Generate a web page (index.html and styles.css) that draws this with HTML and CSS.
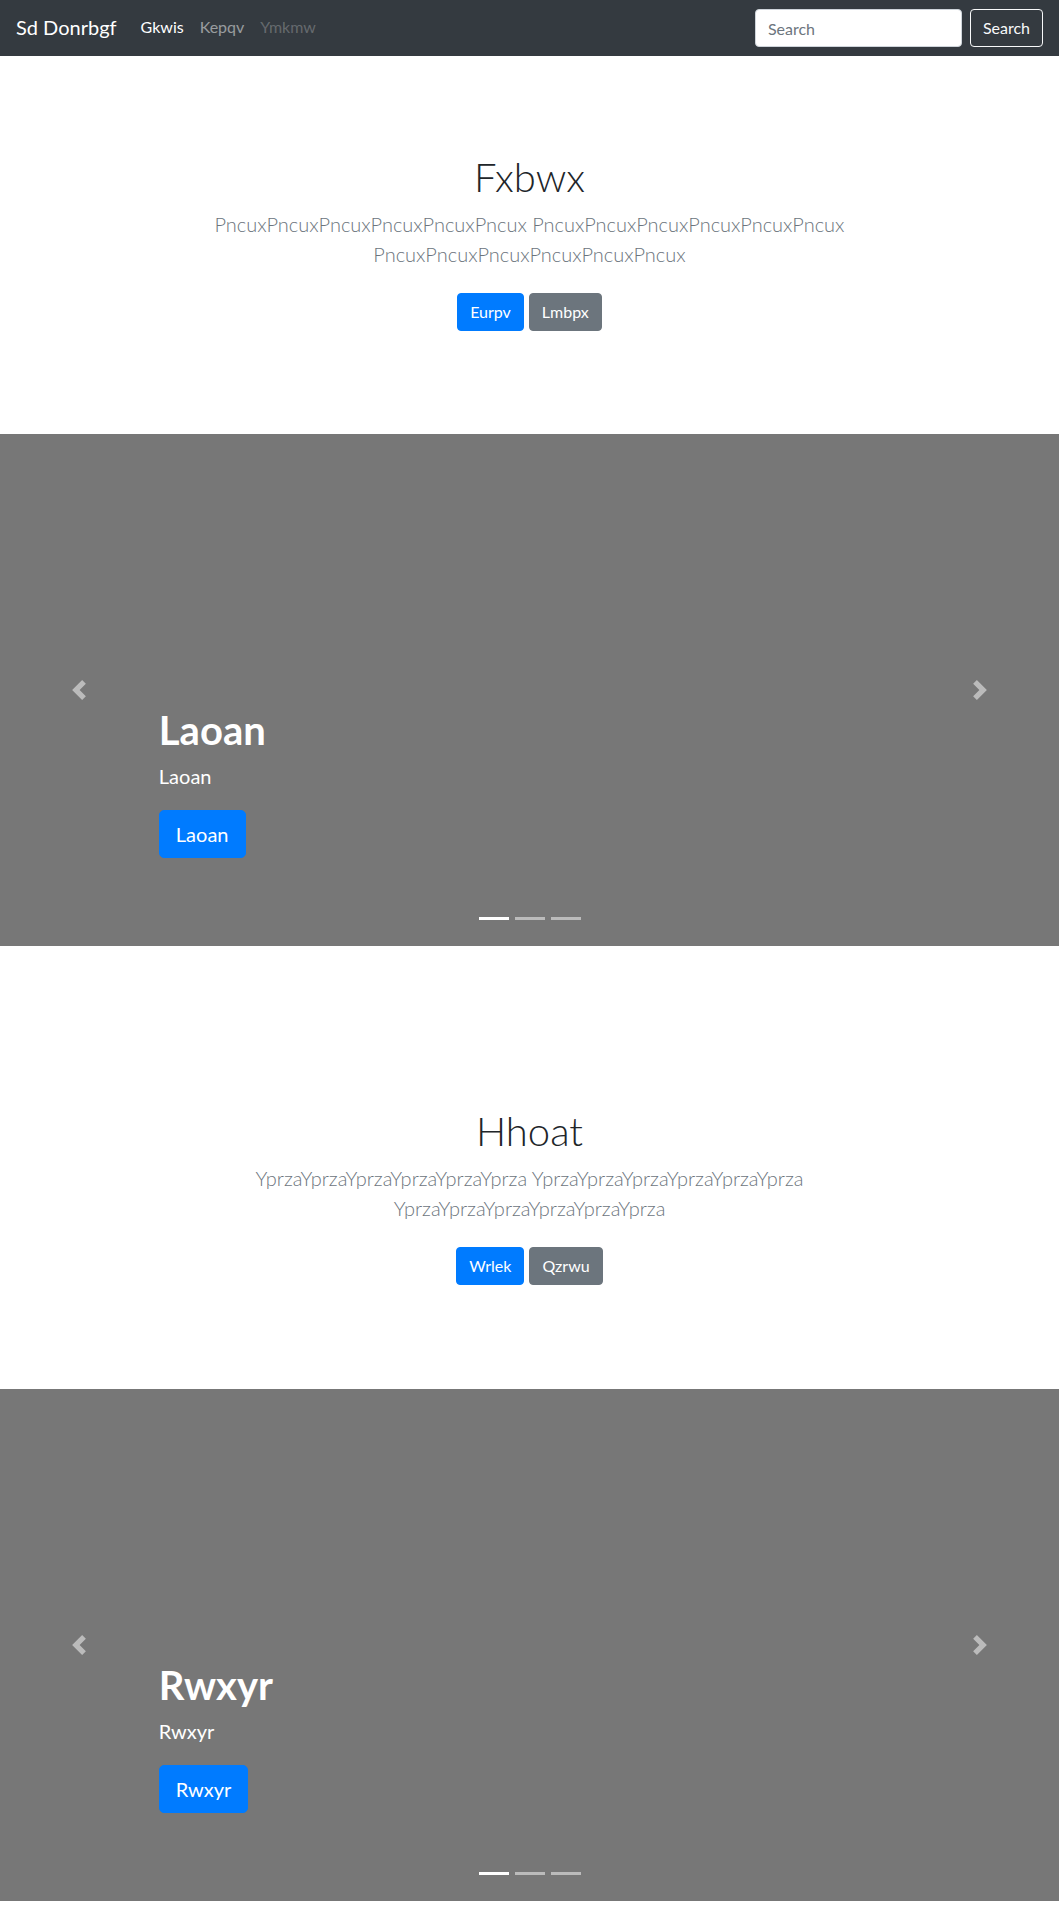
FILE: index.html
```html
<!DOCTYPE html>
<html lang="en">
<head>
<meta charset="utf-8">
<title>Sd Donrbgf</title>
<link rel="stylesheet" href="styles.css">
</head>
<body>
<nav class="navbar">
  <a class="brand" href="#">Sd Donrbgf</a>
  <ul class="nav">
    <li><a class="nav-link active" href="#">Gkwis</a></li>
    <li><a class="nav-link" href="#">Kepqv</a></li>
    <li><a class="nav-link disabled" href="#">Ymkmw</a></li>
  </ul>
  <form class="search">
    <input class="search-input" type="text" placeholder="Search">
    <button class="search-btn" type="button">Search</button>
  </form>
</nav>
<main>
  <section class="hero">
    <div class="hero-inner">
      <h1 class="hero-title">Fxbwx</h1>
      <p class="lead">PncuxPncuxPncuxPncuxPncuxPncux PncuxPncuxPncuxPncuxPncuxPncux PncuxPncuxPncuxPncuxPncuxPncux</p>
      <p class="actions"><a class="btn btn-primary" href="#">Eurpv</a><a class="btn btn-secondary" href="#">Lmbpx</a></p>
    </div>
  </section>
  <section class="carousel">
    <div class="control"><svg class="chev" viewBox="0 0 8 8" width="20" height="20"><path d="M5.25 0l-4 4 4 4 1.5-1.5L4.25 4l2.5-2.5L5.25 0z" fill="#fff"/></svg></div>
    <div class="caption">
      <h1 class="caption-title">Laoan</h1>
      <p class="caption-text">Laoan</p>
      <p class="caption-actions"><a class="btn btn-lg btn-primary" href="#">Laoan</a></p>
    </div>
    <div class="control"><svg class="chev" viewBox="0 0 8 8" width="20" height="20"><path d="M2.75 0l-1.5 1.5L3.75 4l-2.5 2.5L2.75 8l4-4-4-4z" fill="#fff"/></svg></div>
    <ol class="indicators"><li class="active"></li><li></li><li></li></ol>
  </section>
  <section class="hero hero-second">
    <div class="hero-inner">
      <h1 class="hero-title">Hhoat</h1>
      <p class="lead">YprzaYprzaYprzaYprzaYprzaYprza YprzaYprzaYprzaYprzaYprzaYprza YprzaYprzaYprzaYprzaYprzaYprza</p>
      <p class="actions"><a class="btn btn-primary" href="#">Wrlek</a><a class="btn btn-secondary" href="#">Qzrwu</a></p>
    </div>
  </section>
  <section class="carousel">
    <div class="control"><svg class="chev" viewBox="0 0 8 8" width="20" height="20"><path d="M5.25 0l-4 4 4 4 1.5-1.5L4.25 4l2.5-2.5L5.25 0z" fill="#fff"/></svg></div>
    <div class="caption">
      <h1 class="caption-title">Rwxyr</h1>
      <p class="caption-text">Rwxyr</p>
      <p class="caption-actions"><a class="btn btn-lg btn-primary" href="#">Rwxyr</a></p>
    </div>
    <div class="control"><svg class="chev" viewBox="0 0 8 8" width="20" height="20"><path d="M2.75 0l-1.5 1.5L3.75 4l-2.5 2.5L2.75 8l4-4-4-4z" fill="#fff"/></svg></div>
    <ol class="indicators"><li class="active"></li><li></li><li></li></ol>
  </section>
</main>
</body>
</html>
```
FILE: styles.css
```css
* { box-sizing: border-box; }
html, body { margin: 0; padding: 0; }
body {
  font-family: Lato, "Open Sans", "Liberation Sans", sans-serif;
  font-size: 16px;
  line-height: 1.5;
  color: #212529;
  background: #fff;
}
a { text-decoration: none; }

/* navbar */
.navbar {
  height: 56px;
  background: #343a40;
  display: flex;
  align-items: center;
  padding: 0 16px;
}
.brand {
  color: #fff;
  font-size: 20px;
  line-height: 30px;
  margin-right: 16px;
  margin-top: -3px;
}
.nav {
  list-style: none;
  margin: 0;
  padding: 0;
  display: flex;
}
.nav-link {
  display: block;
  padding: 0 8px;
  margin-top: -2px;
  line-height: 24px;
  color: rgba(255,255,255,.5);
}
.nav-link.active { color: #fff; }
.nav-link.disabled { color: rgba(255,255,255,.25); }
.search {
  margin-left: auto;
  display: flex;
  gap: 8px;
}
.search-input {
  width: 207px;
  height: 38px;
  padding: 6px 12px;
  border: 1px solid #ced4da;
  border-radius: 4px;
  font-family: inherit;
  font-size: 16px;
  color: #495057;
  background: #fff;
}
.search-input::placeholder { color: #6c757d; }
.search-btn {
  height: 38px;
  padding: 6px 12px;
  border: 1px solid #f8f9fa;
  border-radius: 4px;
  background: transparent;
  color: #f8f9fa;
  font-family: inherit;
  font-size: 16px;
  line-height: 24px;
}

/* hero */
.hero {
  padding: 97px 15px 95px;
  text-align: center;
}
.hero-second { padding-top: 161px; padding-bottom: 96px; }
.hero-inner {
  max-width: 680px;
  margin: 0 auto;
}
.hero-title {
  margin: 0;
  font-size: 40px;
  font-weight: 300;
  line-height: 48px;
  color: #212529;
}
.lead {
  margin: 8px 0 0;
  font-size: 20px;
  font-weight: 300;
  line-height: 30px;
  color: #6c757d;
}
.actions {
  margin: 16px 0 0;
  padding: 8px 0;
  display: flex;
  justify-content: center;
  gap: 5px;
}
.btn {
  display: inline-block;
  padding: 6px 12px;
  border: 1px solid transparent;
  border-radius: 4px;
  font-size: 16px;
  line-height: 24px;
  color: #fff;
}
.btn-primary { background: #007bff; border-color: #007bff; }
.btn-secondary { background: #6c757d; border-color: #6c757d; }
.btn-lg {
  padding: 8px 16px;
  font-size: 20px;
  line-height: 30px;
  border-radius: 5px;
}

/* carousel */
.carousel {
  position: relative;
  height: 512px;
  background: #777;
  display: grid;
  grid-template-columns: 15% 1fr 15%;
}
.control {
  display: flex;
  align-items: center;
  justify-content: center;
  opacity: .5;
}
.chev { display: block; }
.caption {
  align-self: end;
  padding: 20px 0 68px;
  color: #fff;
  text-align: left;
}
.caption-title {
  margin: 0 0 8px;
  font-size: 40px;
  font-weight: 700;
  line-height: 48px;
  padding-top: 1px;
}
.caption-text {
  margin: 0 0 20px;
  font-size: 20px;
  line-height: 28px;
}
.caption-actions {
  margin: 0 0 20px;
  display: flex;
}
.indicators {
  position: absolute;
  left: 0;
  right: 0;
  bottom: 26px;
  margin: 0;
  padding: 0;
  list-style: none;
  display: flex;
  justify-content: center;
  gap: 6px;
}
.indicators li {
  width: 30px;
  height: 3px;
  background: #fff;
  opacity: .5;
}
.indicators li.active { opacity: 1; }
```
